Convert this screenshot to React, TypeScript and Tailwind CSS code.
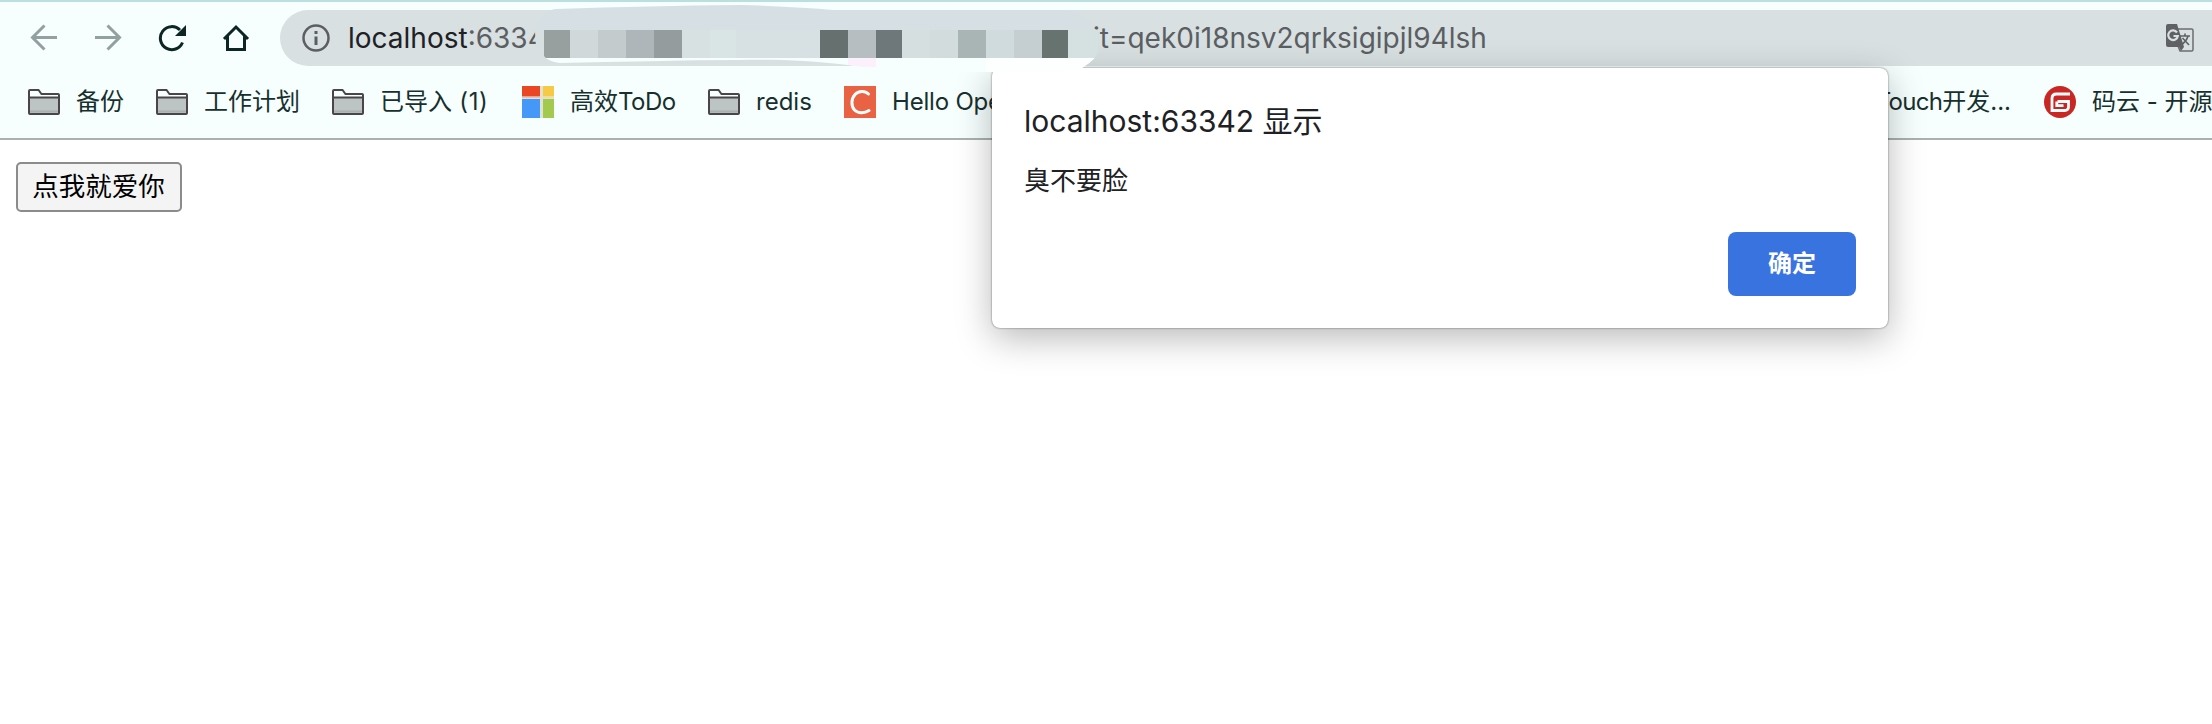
import React from "react";

const FONT = "font-['Inter','Noto_Sans_CJK_SC',sans-serif]";

function Folder() {
  return (
    <svg width="32" height="26" viewBox="0 0 32 26" fill="none" className="shrink-0">
      <path d="M1 9H31V24Q31 25 30 25H2Q1 25 1 24Z" fill="#bcc4c4" />
      <path d="M2 22.500H30" stroke="#a9b0b0" strokeWidth="2" />
      <path
        d="M1 2Q1 1 2 1H10.500L13.500 5H30Q31 5 31 6V24Q31 25 30 25H2Q1 25 1 24ZM1 8.500H31"
        stroke="#4a4546"
        strokeWidth="2"
      />
    </svg>
  );
}

function Tiles() {
  return (
    <svg width="32" height="32" viewBox="0 0 32 32" className="shrink-0">
      <rect width="32" height="32" fill="#dfe3d0" />
      <rect width="18" height="10" fill="#ea4624" />
      <rect x="21" width="11" height="10" fill="#f6ca46" />
      <rect y="10" width="18" height="1.500" fill="#f0a090" />
      <rect x="21" y="10" width="11" height="1.500" fill="#f6dc92" />
      <rect y="13" width="18" height="19" fill="#4598f7" />
      <rect x="21" y="13" width="11" height="19" fill="#a3c94e" />
    </svg>
  );
}

function CLogo() {
  return (
    <svg width="32" height="32" viewBox="0 0 32 32" fill="none" className="shrink-0">
      <rect width="32" height="32" fill="#e96243" />
      <path d="M24.500 8C21 4.500 14.500 4.500 11 8.500C7 13 7 20 10.500 24C14 27.500 20.500 27.500 25 24.500" stroke="#fff" strokeWidth="3" strokeLinecap="round" />
    </svg>
  );
}

function Gitee() {
  return (
    <svg width="32" height="32" viewBox="0 0 32 32" fill="none" className="shrink-0">
      <circle cx="16" cy="16" r="16" fill="#c92724" />
      <path
        d="M26 8H12.500Q8 8 8 12.500V24.500H20.500Q24.500 24.500 24.500 20.500V15.500H13.500M19.500 19.700H12.800V15.500"
        stroke="#fff"
        strokeWidth="2.800"
      />
    </svg>
  );
}

function Mark({ icon, label, box }: { icon: React.ReactNode; label: React.ReactNode; box: string }) {
  return (
    <div className={`flex shrink-0 items-center gap-4 whitespace-nowrap ${box}`}>
      {icon}
      <span>{label}</span>
    </div>
  );
}

const BLOCKS: [number, number, string][] = [
  [544, 26, "#97a09f"],
  [570, 28, "#d0d8d9"],
  [598, 28, "#c3cbcd"],
  [626, 28, "#aeb6b9"],
  [654, 28, "#959c9d"],
  [682, 28, "#d7e1e2"],
  [710, 26, "#d9e5e5"],
  [736, 84, "#d7e0e2"],
  [820, 28, "#66706f"],
  [848, 28, "#b7bec1"],
  [876, 26, "#6e787a"],
  [902, 28, "#d5dfdf"],
  [930, 28, "#d2dcdc"],
  [958, 28, "#a9b5b4"],
  [986, 28, "#d0dbdd"],
  [1014, 28, "#c5ced0"],
  [1042, 26, "#67736f"],
  [1068, 32, "#d5e0e1"],
];

function Mosaic() {
  return (
    <svg width="580" height="76" viewBox="530 0 580 76" className="absolute left-[530px] top-0 z-20">
      <defs>
        <clipPath id="smudge">
          <path d="M535 32C536 20 545 10 556 9C620 7 680 5.500 740 5C780 6 810 8 834 10H1060C1080 10 1090 20 1094 29L1098.500 31V50C1097 57 1091 62 1082 68C1070 72 1000 72 950 72C900 71 870 68 848 65C810 60 770 59 740 60C680 60 620 62 560 63C552 62 546 59 544 56V48H536Z" />
        </clipPath>
      </defs>
      <g clipPath="url(#smudge)">
        <rect x="530" y="0" width="580" height="30" fill="#d6e0e4" />
        <rect x="530" y="30" width="20" height="28" fill="#d7dfe0" />
        <rect x="544" y="58" width="560" height="18" fill="#f7fffe" />
        <rect x="986" y="58" width="120" height="18" fill="#fdfffe" />
        <rect x="848" y="58" width="28" height="9" fill="#fcf0fd" />
        {BLOCKS.map(([x, w, c]) => (
          <rect key={x} x={x} y="30" width={w} height="28" fill={c} />
        ))}
      </g>
    </svg>
  );
}

export default function App() {
  return (
    <div className={`relative h-[724px] w-[2212px] overflow-hidden bg-white ${FONT}`}>
      <header className="h-[140px] border-b-2 border-t-2 border-b-[#a9b2b1] border-t-[#bbdede] bg-[#f6fffe]">
        <div className="flex h-[72px] items-center">
          <div className="flex w-[280px] shrink-0 items-center gap-9 pl-[30px]">
            <svg width="28" height="28" viewBox="0 0 28 28" fill="none" stroke="#92a09f" strokeWidth="3">
              <path d="M27 13.500H3M14.500 1.500L2.500 13.500L14.500 25.500" />
            </svg>
            <svg width="28" height="28" viewBox="0 0 28 28" fill="none" stroke="#92a09f" strokeWidth="3">
              <path d="M1 13.500H25M13.500 1.500L25.500 13.500L13.500 25.500" />
            </svg>
            <svg width="28" height="28" viewBox="0 0 28 28" fill="none">
              <path d="M24.500 18.500A11.500 11.500 0 1 1 22 6" stroke="#0c2624" strokeWidth="3" />
              <path d="M28 1V12H17Z" fill="#0c2624" />
            </svg>
            <svg width="28" height="28" viewBox="0 0 28 28" fill="none" stroke="#0c2624" strokeWidth="3">
              <path d="M2 15L14 3L26 15M5.500 12V25.500H22.500V12" />
            </svg>
          </div>
          <div className="flex h-14 flex-1 items-center rounded-l-full bg-[#d8e0e1] pl-[22px] text-[28px] text-[#5b5e62]">
            <svg width="28" height="28" viewBox="0 0 28 28" fill="none" className="shrink-0">
              <circle cx="14" cy="14" r="12.500" stroke="#5b5e62" strokeWidth="2.500" />
              <path d="M14 7V10M14 12.500V21" stroke="#5b5e62" strokeWidth="3" />
            </svg>
            <div className="flex w-[763px] shrink-0 whitespace-nowrap pl-[18px]">
              <span className="text-[#202124]">localhost</span>
              <span>:6334</span>
            </div>
            <span className="flex-1 whitespace-nowrap">jt=qek0i18nsv2qrksigipjl94lsh</span>
            <svg width="28" height="28" viewBox="0 0 28 28" fill="none" className="mr-[18px] shrink-0">
              <path d="M12 5H25.500Q27 5 27 6.500V25.500Q27 27 25.500 27H14L12 22" stroke="#6b6e70" strokeWidth="1.500" />
              <path d="M2 0H11L18 23L15 27L13 23H2Q0 23 0 21V2Q0 0 2 0Z" fill="#5f6164" />
              <path d="M11 8.500A4.800 4.800 0 1 0 11.800 12H7.500" stroke="#d8e0e1" strokeWidth="2.200" />
              <path d="M14 12H24M19 9.500V12M22 12C21 16 18 19 15 21M16.500 14L23 21" stroke="#5f6164" strokeWidth="1.600" />
            </svg>
          </div>
        </div>
        <div className="flex h-[56px] items-center overflow-hidden pl-7 text-[24px] text-[#17302e]">
          <Mark icon={<Folder />} label="备份" box="w-[128px]" />
          <Mark icon={<Folder />} label="工作计划" box="w-[176px]" />
          <Mark icon={<Folder />} label={<>已导入<span className="tracking-[0.6px]"> (1)</span></>} box="w-[190px]" />
          <Mark icon={<Tiles />} label={<>高效<span className="tracking-[-0.5px]">ToDo</span></>} box="w-[186px]" />
          <Mark icon={<Folder />} label="redis" box="w-[136px]" />
          <Mark icon={<CLogo />} label="Hello OpenResty" box="w-[300px] tracking-[-0.2px]" />
          <Mark icon={null} label={<><span className="tracking-[-0.7px]">Touch</span>开发...</>} box="w-[867px] justify-end" />
          <Mark icon={<Gitee />} label="码云 - 开源中国" box="ml-[33px]" />
        </div>
      </header>
      <main className="px-4 pt-[22px]">
        <button className="flex h-[50px] w-[166px] items-center justify-center whitespace-nowrap rounded-[5px] border-2 border-[#8b8b8b] bg-[#f4f4f4] pr-px text-[26.500px] text-black">
          点我就爱你
        </button>
      </main>
      <section className="absolute left-[992px] top-[68px] z-10 flex h-[260px] w-[896px] flex-col rounded-[8px] bg-white px-8 pt-[31px] text-[#202124] shadow-[0_0_2px_rgba(0,0,0,0.6),0_10px_36px_rgba(0,0,0,0.28)]">
        <h1 className="whitespace-nowrap text-[30px] leading-[44px]">localhost:63342 显示</h1>
        <p className="mt-[18px] text-[26px] leading-[40px]">臭不要脸</p>
        <button className="mt-[31px] h-16 w-32 self-end rounded-[8px] bg-[#3873e0] text-[24px] font-bold text-white">
          确定
        </button>
      </section>
      <Mosaic />
    </div>
  );
}
